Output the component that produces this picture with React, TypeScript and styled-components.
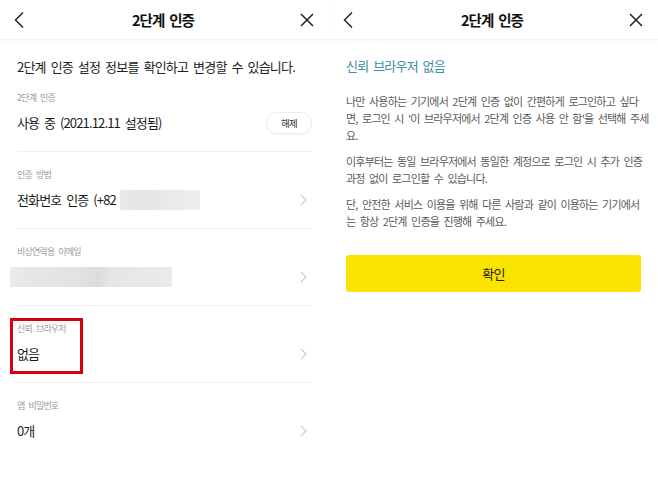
import styled, { createGlobalStyle } from "styled-components";

const GlobalStyle = createGlobalStyle`
  html, body {
    margin: 0;
    padding: 0;
    background: #ffffff;
  }
  body {
    font-family: "Noto Sans CJK KR", "Noto Sans", sans-serif;
    color: #1a1a1a;
    letter-spacing: -0.05em;
    word-spacing: 0.17em;
  }
`;

function BackIcon() {
  return (
    <svg width="12" height="18" viewBox="0 0 12 18" fill="none">
      <path d="M10 1.5L2.5 9L10 16.5" stroke="#222" strokeWidth="1.5" />
    </svg>
  );
}

function CloseIcon() {
  return (
    <svg width="14" height="14" viewBox="0 0 14 14" fill="none">
      <path d="M1 1L13 13M13 1L1 13" stroke="#222" strokeWidth="1.5" />
    </svg>
  );
}

function Chevron() {
  return (
    <svg width="7" height="12" viewBox="0 0 7 12" fill="none">
      <path d="M1 1L6 6L1 11" stroke="#cfcfcf" strokeWidth="1.3" />
    </svg>
  );
}

function Header() {
  return (
    <Bar>
      <IconButton>
        <BackIcon />
      </IconButton>
      <Title>2단계 인증</Title>
      <IconButton>
        <CloseIcon />
      </IconButton>
    </Bar>
  );
}

export default function App() {
  return (
    <Page>
      <GlobalStyle />
      <Panel>
        <Header />
        <Body>
          <Intro>2단계 인증 설정 정보를 확인하고 변경할 수 있습니다.</Intro>

          <Section $first>
            <Label>2단계 인증</Label>
            <Row>
              <Value>사용 중 (2021.12.11 설정됨)</Value>
              <PillButton>해제</PillButton>
            </Row>
          </Section>

          <Section>
            <Label>인증 방법</Label>
            <Row>
              <Value>
                전화번호 인증 (+82
                <Blur $width={80} />
              </Value>
              <Chevron />
            </Row>
          </Section>

          <Section>
            <Label>비상연락용 이메일</Label>
            <Row>
              <Value>
                <Blur $width={162} $pullLeft />
              </Value>
              <Chevron />
            </Row>
          </Section>

          <Section>
            <Highlight>
              <Label>신뢰 브라우저</Label>
              <Value $spaced>없음</Value>
            </Highlight>
            <ChevronCell>
              <Chevron />
            </ChevronCell>
          </Section>

          <Section $last>
            <Label>앱 비밀번호</Label>
            <Row>
              <Value>0개</Value>
              <Chevron />
            </Row>
          </Section>
        </Body>
      </Panel>

      <Panel>
        <Header />
        <Body>
          <Heading>신뢰 브라우저 없음</Heading>
          <Paragraph>
            나만 사용하는 기기에서 2단계 인증 없이 간편하게 로그인하고 싶다
            <br />
            면, 로그인 시 '이 브라우저에서 2단계 인증 사용 안 함'을 선택해 주세
            <br />
            요.
          </Paragraph>
          <Paragraph>
            이후부터는 동일 브라우저에서 동일한 계정으로 로그인 시 추가 인증
            <br />
            과정 없이 로그인할 수 있습니다.
          </Paragraph>
          <Paragraph>
            단, 안전한 서비스 이용을 위해 다른 사람과 같이 이용하는 기기에서
            <br />는 항상 2단계 인증을 진행해 주세요.
          </Paragraph>
          <ConfirmButton>확인</ConfirmButton>
        </Body>
      </Panel>
    </Page>
  );
}

const Page = styled.div`
  display: flex;
  width: 658px;
  height: 493px;
  background: #fff;
  overflow: hidden;
`;

const Panel = styled.div`
  width: 329px;
  flex-shrink: 0;
  display: flex;
  flex-direction: column;
`;

const Bar = styled.div`
  height: 39px;
  display: flex;
  align-items: center;
  justify-content: space-between;
  padding: 0 14px 0 11px;
  border-bottom: 1px solid #f1f1f1;
  box-shadow: 0 1px 2px rgba(0, 0, 0, 0.03);
`;

const IconButton = styled.div`
  width: 16px;
  height: 20px;
  display: flex;
  align-items: center;
  justify-content: center;
`;

const Title = styled.div`
  font-size: 14.5px;
  font-weight: 700;
  color: #111;
  letter-spacing: -0.07em;
`;

const Body = styled.div`
  padding: 0 17px;
  display: flex;
  flex-direction: column;
`;

const Intro = styled.div`
  margin-top: 18px;
  font-size: 13px;
  line-height: 18px;
  color: #222;
  letter-spacing: -0.06em;
  white-space: nowrap;
`;

const Section = styled.div<{ $first?: boolean; $last?: boolean }>`
  position: relative;
  padding: ${(p) => (p.$first ? "15px" : "16px")} 0 18px;
  border-bottom: ${(p) => (p.$last ? "none" : "1px solid #efefef")};
`;

const Label = styled.div`
  font-size: 9px;
  line-height: 14px;
  color: #9a9a9a;
`;

const Row = styled.div`
  margin-top: 8px;
  height: 20px;
  display: flex;
  align-items: center;
  justify-content: space-between;
  padding-right: 5px;
`;

const Value = styled.div<{ $spaced?: boolean }>`
  margin-top: ${(p) => (p.$spaced ? "8px" : "0")};
  font-size: 13px;
  line-height: 20px;
  letter-spacing: -0.065em;
  color: #1a1a1a;
  display: flex;
  align-items: center;
  white-space: pre;
`;

const Blur = styled.span<{ $width: number; $pullLeft?: boolean }>`
  display: inline-block;
  width: ${(p) => p.$width}px;
  height: 20px;
  margin-left: ${(p) => (p.$pullLeft ? "-7px" : "4px")};
  background: ${(p) =>
    p.$pullLeft
      ? "linear-gradient(90deg, #ececec 0%, #e6e6e6 12%, #e3e3e3 40%, #dcdcdc 55%, #e6e6e6 62%, #eaeaea 100%)"
      : "linear-gradient(90deg, #e9e9e9 0%, #e4e4e4 30%, #e9e9e9 60%, #eeeeee 100%)"};
`;

const PillButton = styled.div`
  margin-right: -5px;
  width: 44px;
  height: 20px;
  border: 1px solid #ececec;
  border-radius: 11px;
  box-shadow: 0 1px 2px rgba(0, 0, 0, 0.04);
  display: flex;
  align-items: center;
  justify-content: center;
  font-size: 9.5px;
  color: #333;
`;

const Highlight = styled.div`
  position: relative;
  &::after {
    content: "";
    position: absolute;
    left: -7px;
    top: -4px;
    width: 73px;
    height: 56px;
    box-sizing: border-box;
    border: 3px solid #d8000f;
  }
`;

const ChevronCell = styled.div`
  position: absolute;
  right: 5px;
  bottom: 22px;
  height: 12px;
  display: flex;
`;

const Heading = styled.div`
  margin-top: 17px;
  font-size: 13px;
  line-height: 18px;
  color: #3f8ea6;
`;

const Paragraph = styled.p`
  margin: 0;
  margin-top: 9px;
  font-size: 11px;
  line-height: 17px;
  color: #5a5a5a;
  white-space: nowrap;
  &:first-of-type {
    margin-top: 18px;
  }
`;

const ConfirmButton = styled.div`
  margin-top: 25px;
  height: 37px;
  border-radius: 3px;
  background: #fbe300;
  display: flex;
  align-items: center;
  justify-content: center;
  font-size: 13px;
  color: #1a1a1a;
`;
